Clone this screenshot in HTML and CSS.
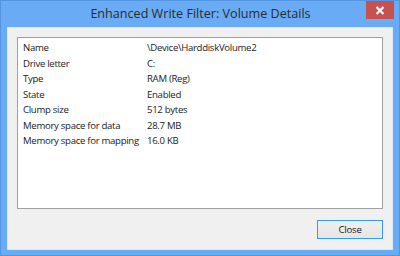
FILE: index.html
```html
<!DOCTYPE html>
<html>
<head>
    <title>Enhanced Write Filter: Volume Details</title>
    <link rel="stylesheet" href="styles.css">
</head>
<body>
    <div class="window">
        <div class="titlebar">
            <div></div>
            <div class="title">Enhanced Write Filter: Volume Details</div>
            <div class="caption-buttons">
                <div class="close-btn">
                    <svg width="10" height="9" viewBox="0 0 10 9">
                        <path d="M1.5 1 L8.5 8 M8.5 1 L1.5 8" stroke="#fff" stroke-width="2.2" fill="none"/>
                    </svg>
                </div>
            </div>
        </div>

        <div class="client">
            <div class="details-list">
                <div class="row"><span class="label">Name</span><span class="value">\Device\HarddiskVolume2</span></div>
                <div class="row"><span class="label">Drive letter</span><span class="value">C:</span></div>
                <div class="row"><span class="label">Type</span><span class="value">RAM (Reg)</span></div>
                <div class="row"><span class="label">State</span><span class="value">Enabled</span></div>
                <div class="row"><span class="label">Clump size</span><span class="value">512 bytes</span></div>
                <div class="row"><span class="label">Memory space for data</span><span class="value">28.7 MB</span></div>
                <div class="row"><span class="label">Memory space for mapping</span><span class="value">16.0 KB</span></div>
            </div>
            <div class="button-row">
                <button class="btn-close">Close</button>
            </div>
        </div>
    </div>
</body>
</html>
```

FILE: styles.css
```css
html, body {
    margin: 0;
    padding: 0;
}
body {
    width: 400px;
    height: 256px;
    overflow: hidden;
    font-family: "Open Sans", "Liberation Sans", sans-serif;
}
.window {
    box-sizing: border-box;
    width: 400px;
    height: 256px;
    background: #6aabf5;
    border: 1px solid #5495e0;
    display: flex;
    flex-direction: column;
}
.titlebar {
    height: 27px;
    display: grid;
    grid-template-columns: 1fr auto 1fr;
    align-items: start;
}
.title {
    font-family: "Open Sans", sans-serif;
    font-size: 12.6px;
    color: #2b2b2b;
    line-height: 26px;
    padding-left: 1px;
}
.caption-buttons {
    display: flex;
    justify-content: flex-end;
    padding-right: 5px;
}
.close-btn {
    width: 28px;
    height: 18px;
    background: #c75050;
    display: flex;
    align-items: center;
    justify-content: center;
}
.client {
    flex: 1;
    margin: 0 6px 6px 6px;
    background: #f0f0f0;
    border: 1px solid #d9e8f9;
    padding: 9px 9px 10px 9px;
    display: flex;
    flex-direction: column;
    gap: 11px;
}
.details-list {
    height: 168px;
    background: #fff;
    border: 1px solid #a0a0a0;
    padding-top: 2px;
    font-size: 9.6px;
    letter-spacing: -0.3px;
    color: #1a1a1a;
}
.row {
    display: flex;
    height: 15.5px;
    line-height: 15.5px;
    padding-left: 5px;
}
.label {
    width: 124px;
}
.button-row {
    display: flex;
    justify-content: flex-end;
}
.btn-close {
    width: 66px;
    height: 19px;
    margin: 0;
    padding: 0;
    border: 1px solid #3399ff;
    background: linear-gradient(#f0f0f0, #e5e5e5);
    font-family: "Open Sans", sans-serif;
    font-size: 9.6px;
    letter-spacing: -0.2px;
    color: #1a1a1a;
}
```
